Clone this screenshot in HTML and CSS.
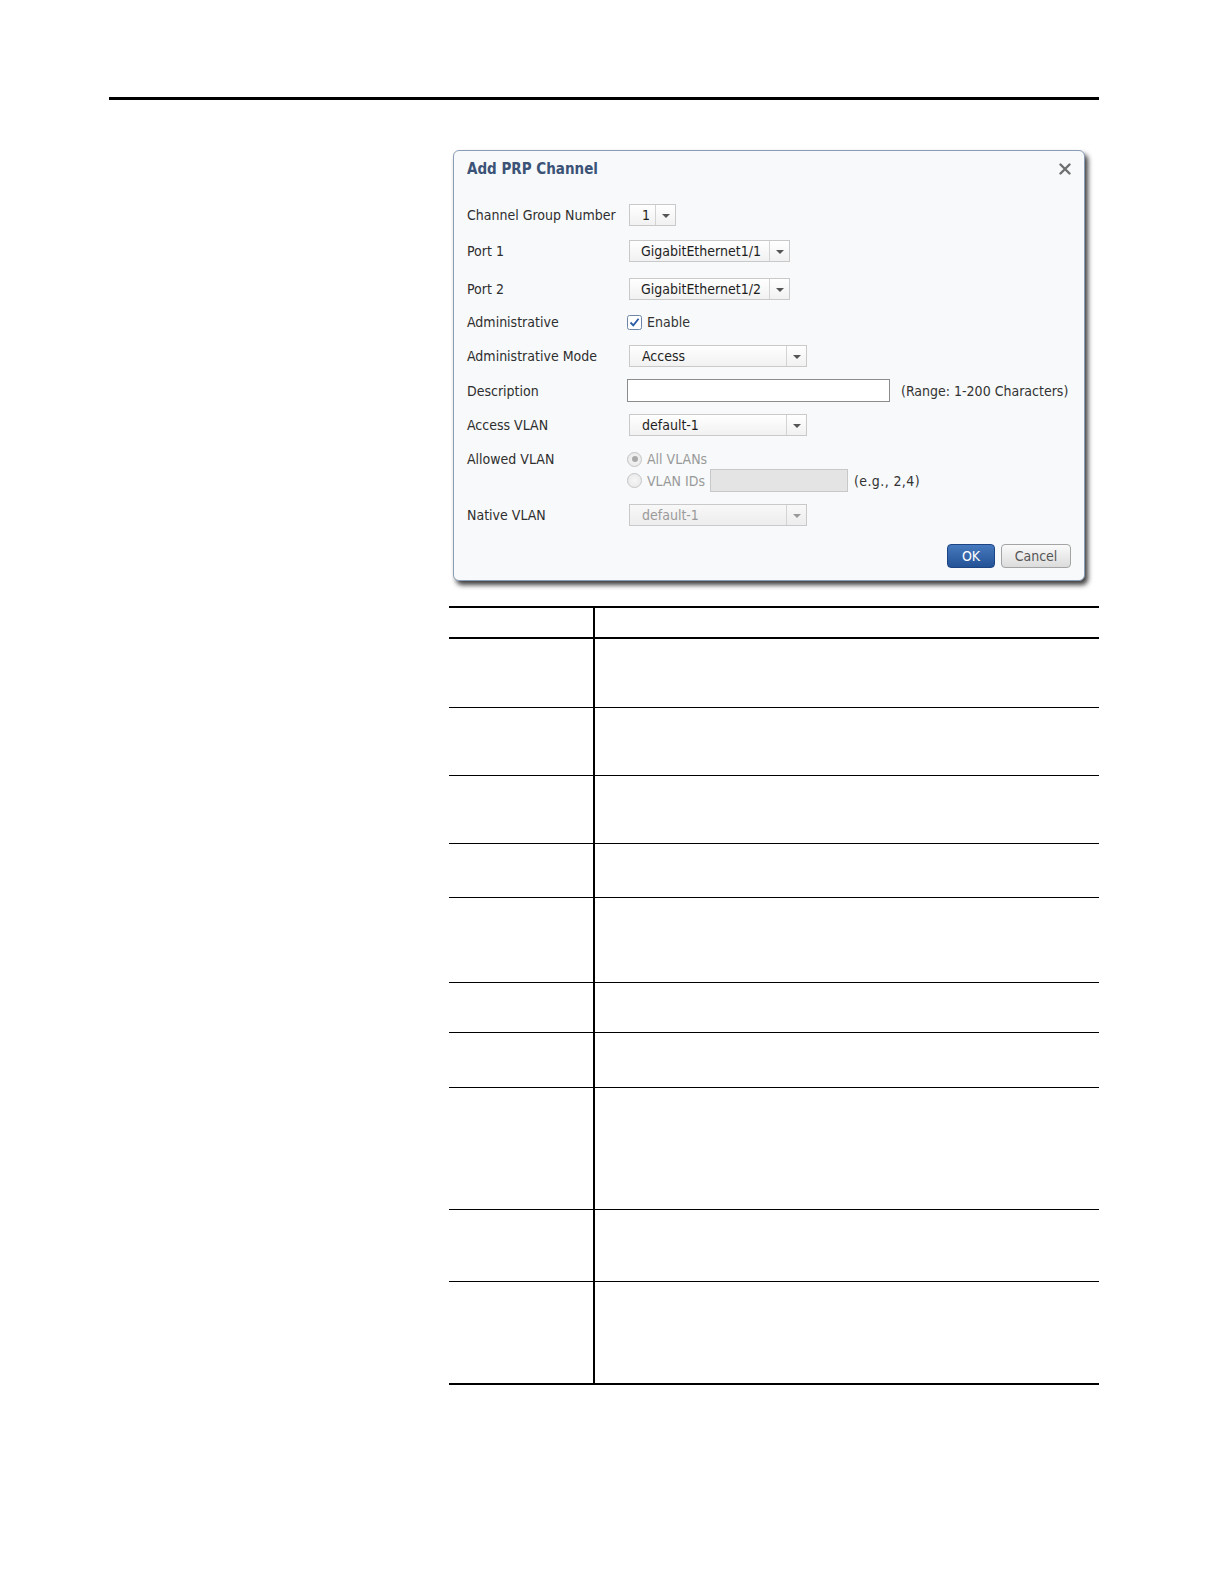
FILE: index.html
```html
<!DOCTYPE html>
<html>
<head>
<meta charset="utf-8">
<link rel="stylesheet" href="styles.css">
</head>
<body>
<div class="page">
  <div class="top-rule"></div>
  <div class="content">
    <div class="dialog">
      <div class="dlg-head">
        <span class="dlg-title">Add PRP Channel</span>
        <svg class="close" width="12" height="12" viewBox="0 0 12 12"><path d="M1.5 1.5L10.5 10.5M10.5 1.5L1.5 10.5" stroke="#6f6f6f" stroke-width="2.4" stroke-linecap="round"/></svg>
      </div>
      <div class="form">
        <div class="row">
          <span class="lbl">Channel Group Number</span>
          <div class="sel sel-xs"><span class="sel-val">1</span><span class="sel-btn"><i class="tri"></i></span></div>
        </div>
        <div class="row row-p1">
          <span class="lbl">Port 1</span>
          <div class="sel sel-md"><span class="sel-val">GigabitEthernet1/1</span><span class="sel-btn"><i class="tri"></i></span></div>
        </div>
        <div class="row row-p2">
          <span class="lbl">Port 2</span>
          <div class="sel sel-md"><span class="sel-val">GigabitEthernet1/2</span><span class="sel-btn"><i class="tri"></i></span></div>
        </div>
        <div class="row row-tight">
          <span class="lbl">Administrative</span>
          <div class="ctl">
            <svg class="chk" width="15" height="15" viewBox="0 0 15 15"><rect x="0.5" y="0.5" width="14" height="14" rx="2" fill="#fff" stroke="#6d86a8"/><path d="M3.5 7.5L6.3 10.4L11.6 3.8" fill="none" stroke="#2a5ca6" stroke-width="1.8"/></svg>
            <span class="opt">Enable</span>
          </div>
        </div>
        <div class="row">
          <span class="lbl">Administrative Mode</span>
          <div class="sel sel-lg"><span class="sel-val">Access</span><span class="sel-btn"><i class="tri"></i></span></div>
        </div>
        <div class="row">
          <span class="lbl">Description</span>
          <div class="ctl">
            <div class="txt"></div>
            <span class="hint">(Range: 1-200 Characters)</span>
          </div>
        </div>
        <div class="row">
          <span class="lbl">Access VLAN</span>
          <div class="sel sel-lg"><span class="sel-val">default-1</span><span class="sel-btn"><i class="tri"></i></span></div>
        </div>
        <div class="row row-multi">
          <span class="lbl lbl-top">Allowed VLAN</span>
          <div class="radios">
            <div class="ctl ctl-r1">
              <span class="radio on"></span><span class="opt dis">All VLANs</span>
            </div>
            <div class="ctl">
              <span class="radio"></span><span class="opt dis">VLAN IDs</span>
              <div class="txt txt-dis"></div>
              <span class="hint hint-eg">(e.g., 2,4)</span>
            </div>
          </div>
        </div>
        <div class="row row-native">
          <span class="lbl">Native VLAN</span>
          <div class="sel sel-lg sel-dis"><span class="sel-val">default-1</span><span class="sel-btn"><i class="tri"></i></span></div>
        </div>
      </div>
      <div class="btns">
        <button class="btn btn-ok">OK</button>
        <button class="btn btn-cancel">Cancel</button>
      </div>
    </div>

    <table class="tbl">
      <tr class="r-head"><td></td><td></td></tr>
      <tr class="r69"><td></td><td></td></tr>
      <tr class="r68"><td></td><td></td></tr>
      <tr class="r68"><td></td><td></td></tr>
      <tr class="r54"><td></td><td></td></tr>
      <tr class="r85"><td></td><td></td></tr>
      <tr class="r50"><td></td><td></td></tr>
      <tr class="r55"><td></td><td></td></tr>
      <tr class="r122"><td></td><td></td></tr>
      <tr class="r72"><td></td><td></td></tr>
      <tr class="r103 r-last"><td></td><td></td></tr>
    </table>
  </div>
</div>
</body>
</html>
```

FILE: styles.css
```css
* { box-sizing: border-box; }
html, body { margin: 0; padding: 0; background: #fff; }
body {
  font-family: "DejaVu Sans Condensed", "DejaVu Sans", sans-serif;
  font-size: 14px;
  color: #333;
}
.page {
  padding-top: 97px;
  padding-bottom: 60px;
}
.top-rule {
  margin-left: 109px;
  width: 990px;
  height: 3px;
  background: #000;
}
.content {
  margin-left: 449px;
  width: 650px;
  padding-top: 50px;
}

/* dialog */
.dialog {
  margin-left: 4px;
  width: 632px;
  height: 431px;
  background: #f7f9fa;
  border: 1px solid #8b9db6;
  border-radius: 6px;
  box-shadow: 3px 4px 5px rgba(30, 30, 30, 0.85);
  padding: 8px 13px 0 13px;
  display: flex;
  flex-direction: column;
}
.dlg-head {
  display: flex;
  justify-content: space-between;
  align-items: center;
  height: 20px;
}
.dlg-title {
  font-weight: bold;
  font-size: 15px;
  color: #3b5376;
}

.form {
  margin-top: 25px;
  display: flex;
  flex-direction: column;
  gap: 12px;
}
.row {
  display: flex;
  align-items: center;
  min-height: 22px;
}
.row-p1 { margin-top: 2px; }
.row-p2 { margin-top: 4px; }
.row-tight { margin-top: -1px; }
.row-multi { align-items: flex-start; margin-top: 1px; }
.lbl {
  width: 162px;
  flex: none;
  color: #2e2e2e;
}
.lbl-top { line-height: 20px; }

.sel {
  display: flex;
  height: 22px;
  border: 1px solid #c9c9c9;
  background: linear-gradient(#ffffff, #f1f1f1);
  color: #1e1e1e;
}
.sel-val {
  flex: 1;
  padding-left: 12px;
  line-height: 20px;
  white-space: nowrap;
  overflow: hidden;
}
.sel-btn {
  width: 20px;
  flex: none;
  border-left: 1px solid #d3d3d3;
  display: flex;
  align-items: center;
  justify-content: center;
}
.tri {
  width: 0;
  height: 0;
  border-left: 4px solid transparent;
  border-right: 4px solid transparent;
  border-top: 4px solid #555;
  margin-top: 1px;
}
.sel-xs { width: 47px; }
.sel-md { width: 161px; }
.sel-md .sel-val { padding-left: 11px; }
.sel-lg { width: 178px; }
.sel-dis { background: linear-gradient(#f8f8f8, #ededed); color: #9a9a9a; }
.sel-dis .tri { border-top-color: #999; }

.ctl {
  display: flex;
  align-items: center;
  margin-left: -2px;
}
.chk { flex: none; }
.opt { margin-left: 5px; color: #333; }
.opt.dis { color: #999; }

.txt {
  width: 263px;
  height: 23px;
  border: 1px solid #8c8c8c;
  background: #fff;
}
.hint { margin-left: 11px; color: #333; }
.hint-eg { margin-left: 6px; letter-spacing: 0.4px; }
.txt-dis {
  width: 138px;
  height: 23px;
  margin-left: 5px;
  border: 1px solid #c8c8c8;
  background: #e4e4e4;
}

.radios { display: flex; flex-direction: column; }
.ctl-r1 { height: 20px; }
.radio {
  width: 15px;
  height: 15px;
  border-radius: 50%;
  border: 1px solid #c4c4c4;
  background: radial-gradient(circle, #f6f6f6 0%, #e6e6e6 100%);
  flex: none;
  position: relative;
}
.radio.on::after {
  content: "";
  position: absolute;
  left: 3.5px;
  top: 3.5px;
  width: 6px;
  height: 6px;
  border-radius: 50%;
  background: #a9a9a9;
}

.btns {
  display: flex;
  justify-content: flex-end;
  gap: 6px;
  margin-top: 18px;
}
.btn {
  font-family: inherit;
  font-size: 14px;
  height: 24px;
  border-radius: 4px;
  padding: 0;
  line-height: 20px;
}
.btn-ok {
  width: 48px;
  color: #fff;
  border: 1px solid #1d4584;
  background: linear-gradient(#4679bd, #245297);
}
.btn-cancel {
  width: 70px;
  color: #555;
  border: 1px solid #a4a4a4;
  background: linear-gradient(#fafafa, #dcdcdc);
}

/* table */
.tbl {
  margin-top: 25px;
  width: 650px;
  border-collapse: collapse;
  table-layout: fixed;
}
.tbl td {
  padding: 0;
  border-bottom: 1px solid #000;
}
.tbl td:first-child {
  width: 145px;
  border-right: 2px solid #000;
}
.tbl tr:first-child td { border-top: 2px solid #000; border-bottom: 2px solid #000; }
.tbl tr.r-last td { border-bottom: 2px solid #000; }
.r-head { height: 31px; }
.r69 { height: 69px; }
.r68 { height: 68px; }
.r54 { height: 54px; }
.r55 { height: 55px; }
.r85 { height: 85px; }
.r50 { height: 50px; }
.r122 { height: 122px; }
.r72 { height: 72px; }
.r103 { height: 103px; }
```
